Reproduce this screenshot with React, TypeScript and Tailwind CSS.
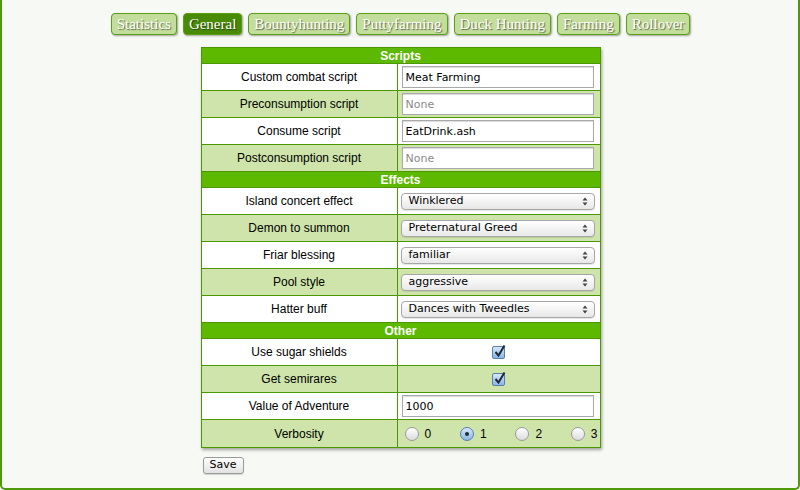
import React from "react";

const tabs = ["Statistics", "General", "Bountyhunting", "Puttyfarming", "Duck Hunting", "Farming", "Rollover"];

function Header({ title }: { title: string }) {
  return (
    <div className="h-[16px] bg-[#5cb900] border-b border-[#4c9600] flex items-center justify-center text-white font-bold text-[12px] leading-none">
      {title}
    </div>
  );
}

function Row({ label, alt, children, last }: { label: string; alt?: boolean; children: React.ReactNode; last?: boolean }) {
  return (
    <div className={`h-[27px] flex ${last ? "" : "border-b border-[#4c9600]"} ${alt ? "bg-[#cee4aa]" : "bg-white"}`}>
      <div className="w-[196px] flex items-center justify-center text-[12px] text-black border-r border-[#4c9600]">{label}</div>
      <div className="flex-1 flex items-center">{children}</div>
    </div>
  );
}

function TextInput({ value, placeholder }: { value?: string; placeholder?: string }) {
  return (
    <div className="ml-[4px] w-[192px] h-[22px] bg-white border border-[#a9a9a9] shadow-[inset_0_1px_1px_rgba(0,0,0,0.15)] flex items-center px-[3px] pt-[2px] text-[11px] [font-family:'DejaVu_Sans',sans-serif]">
      {value ? <span className="text-black">{value}</span> : <span className="text-[#8a8a8a]">{placeholder}</span>}
    </div>
  );
}

function Select({ value }: { value: string }) {
  return (
    <div className="ml-[3px] w-[194px] h-[17px] rounded-[4px] border border-[#a6a6a6] bg-gradient-to-b from-white to-[#e8e8e8] shadow-[0_1px_1px_rgba(0,0,0,0.1)] flex items-center pl-[7px] pr-[6px] pt-[1px] text-[11px] text-black [font-family:'DejaVu_Sans',sans-serif]">
      <span className="flex-1">{value}</span>
      <svg width="6" height="9" viewBox="0 0 6 9">
        <path d="M3 0.5 L5.5 3.5 L0.5 3.5 Z" fill="#444" />
        <path d="M3 8.5 L5.5 5.5 L0.5 5.5 Z" fill="#444" />
      </svg>
    </div>
  );
}

function Check() {
  return (
    <div className="mx-auto w-[13px] h-[13px] rounded-[2px] border border-[#5a7fa8] bg-gradient-to-b from-[#d6e8fb] to-[#8ab6e6] relative">
      <svg className="absolute left-[1px] top-[-3px]" width="12" height="14" viewBox="0 0 12 14">
        <path d="M1.5 8 L4.5 11.5 L10.5 1.5" stroke="#1c2a3a" strokeWidth="2" fill="none" />
      </svg>
    </div>
  );
}

function Radio({ on, label }: { on?: boolean; label: string }) {
  return (
    <div className="flex items-center gap-[6px] text-[12px] text-black">
      {on ? (
        <div className="w-[14px] h-[14px] rounded-full border border-[#5a7fa8] bg-gradient-to-b from-[#d6e8fb] to-[#8ab6e6] flex items-center justify-center">
          <div className="w-[4px] h-[4px] rounded-full bg-[#1c2a3a]" />
        </div>
      ) : (
        <div className="w-[14px] h-[14px] rounded-full border border-[#9a9a9a] bg-gradient-to-b from-white to-[#dcdcdc]" />
      )}
      <span>{label}</span>
    </div>
  );
}

export default function App() {
  return (
    <div className="w-[800px] h-[490px] bg-[#f7f9f4] border-x-2 border-b-2 border-[#4f9a0a] rounded-b-[5px] flex flex-col items-center [font-family:'Liberation_Sans',Arial,sans-serif]">
      <div className="mt-[13px] flex gap-[6px] ml-[1px] [font-family:'Liberation_Serif',serif]">
        {tabs.map((t) => (
          <div
            key={t}
            className={`h-[22px] px-[5px] rounded-[4px] border border-[#5a9e14] flex items-center text-[15px] leading-none text-white [text-shadow:1px_1px_1px_rgba(0,0,0,0.55)] shadow-[1px_1px_2px_rgba(0,0,0,0.35)] ${
              t === "General" ? "bg-[#4a8b06]" : "bg-[#c3dd9c]"
            }`}
          >
            {t}
          </div>
        ))}
      </div>
      <div className="mt-[12px] w-[400px] ml-[1px]">
        <div className="border border-[#4c9600] shadow-[1px_2px_3px_rgba(0,0,0,0.35)]">
          <Header title="Scripts" />
          <Row label="Custom combat script"><TextInput value="Meat Farming" /></Row>
          <Row label="Preconsumption script" alt><TextInput placeholder="None" /></Row>
          <Row label="Consume script"><TextInput value="EatDrink.ash" /></Row>
          <Row label="Postconsumption script" alt><TextInput placeholder="None" /></Row>
          <Header title="Effects" />
          <Row label="Island concert effect"><Select value="Winklered" /></Row>
          <Row label="Demon to summon" alt><Select value="Preternatural Greed" /></Row>
          <Row label="Friar blessing"><Select value="familiar" /></Row>
          <Row label="Pool style" alt><Select value="aggressive" /></Row>
          <Row label="Hatter buff"><Select value="Dances with Tweedles" /></Row>
          <Header title="Other" />
          <Row label="Use sugar shields"><Check /></Row>
          <Row label="Get semirares" alt><Check /></Row>
          <Row label="Value of Adventure"><TextInput value="1000" /></Row>
          <Row label="Verbosity" alt last>
            <div className="flex-1 flex justify-between pl-[7px] pr-[2px]">
              <Radio label="0" />
              <Radio label="1" on />
              <Radio label="2" />
              <Radio label="3" />
            </div>
          </Row>
        </div>
        <div className="mt-[9px] ml-[2px] w-[41px] h-[17px] rounded-[3px] border border-[#9a9a9a] bg-gradient-to-b from-white to-[#e2e2e2] shadow-[0_1px_1px_rgba(0,0,0,0.15)] flex items-center justify-center text-[11px] text-black [font-family:'DejaVu_Sans',sans-serif]">
          Save
        </div>
      </div>
    </div>
  );
}
